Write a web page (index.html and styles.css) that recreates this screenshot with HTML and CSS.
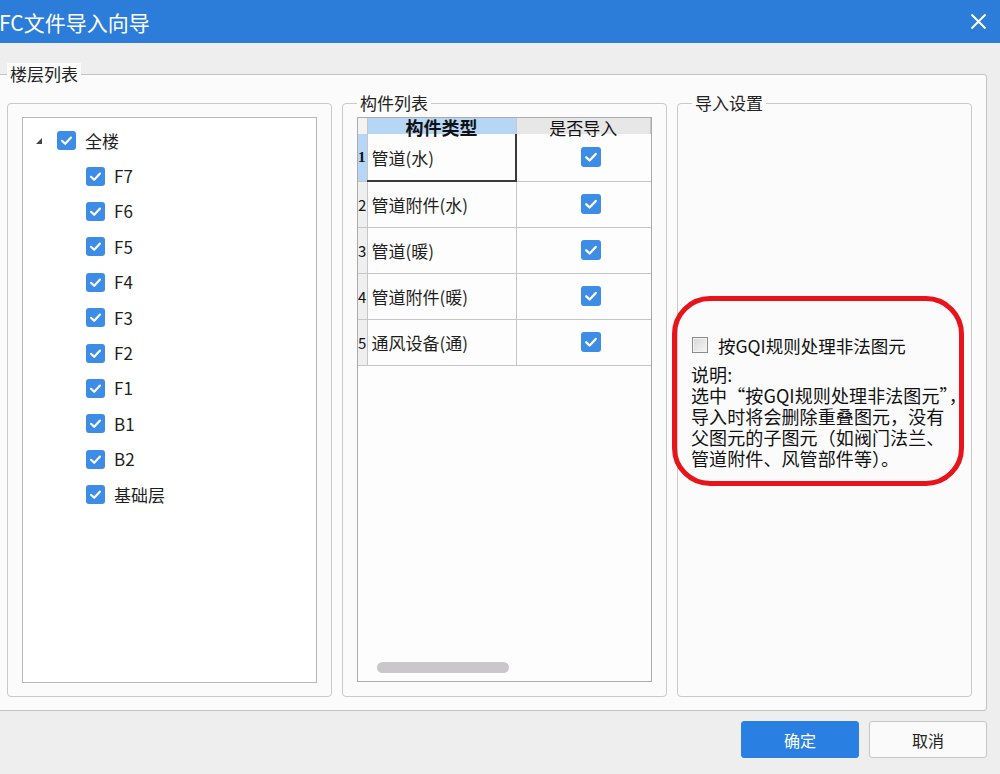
FILE: index.html
```html
<!DOCTYPE html>
<html lang="zh-CN">
<head>
    <meta charset="UTF-8">
    <meta name="viewport" content="width=device-width, initial-scale=1.0">
    <title>FC文件导入向导</title>
    <link rel="stylesheet" href="styles.css">
</head>
<body>
    <div class="dialog">
        <header class="titlebar">
            <span class="title">FC文件导入向导</span>
            <button class="close" aria-label="关闭">
                <svg width="17" height="17" viewBox="0 0 17 17"><path d="M1.5 1.5 L15.5 15.5 M15.5 1.5 L1.5 15.5" stroke="#fff" stroke-width="2" fill="none"/></svg>
            </button>
        </header>

        <section class="group">
            <span class="group-title">楼层列表</span>
            <div class="panels">
                <!-- floor tree -->
                <div class="panel panel-tree">
                    <ul class="tree">
                        <li class="tree-row root">
                            <span class="toggle"><svg width="8" height="8" viewBox="0 0 8 8"><path d="M7 1 L7 7 L1 7 Z" fill="#444"/></svg></span>
                            <span class="check"><svg viewBox="0 0 19 19"><path d="M5 9.8 L8.2 12.8 L14 6.6" stroke="#fff" stroke-width="2.2" fill="none" stroke-linecap="round" stroke-linejoin="round"/></svg></span>
                            <span class="label">全楼</span>
                        </li>
                        <li class="tree-row"><span class="check"><svg viewBox="0 0 19 19"><path d="M5 9.8 L8.2 12.8 L14 6.6" stroke="#fff" stroke-width="2.2" fill="none" stroke-linecap="round" stroke-linejoin="round"/></svg></span><span class="label">F7</span></li>
                        <li class="tree-row"><span class="check"><svg viewBox="0 0 19 19"><path d="M5 9.8 L8.2 12.8 L14 6.6" stroke="#fff" stroke-width="2.2" fill="none" stroke-linecap="round" stroke-linejoin="round"/></svg></span><span class="label">F6</span></li>
                        <li class="tree-row"><span class="check"><svg viewBox="0 0 19 19"><path d="M5 9.8 L8.2 12.8 L14 6.6" stroke="#fff" stroke-width="2.2" fill="none" stroke-linecap="round" stroke-linejoin="round"/></svg></span><span class="label">F5</span></li>
                        <li class="tree-row"><span class="check"><svg viewBox="0 0 19 19"><path d="M5 9.8 L8.2 12.8 L14 6.6" stroke="#fff" stroke-width="2.2" fill="none" stroke-linecap="round" stroke-linejoin="round"/></svg></span><span class="label">F4</span></li>
                        <li class="tree-row"><span class="check"><svg viewBox="0 0 19 19"><path d="M5 9.8 L8.2 12.8 L14 6.6" stroke="#fff" stroke-width="2.2" fill="none" stroke-linecap="round" stroke-linejoin="round"/></svg></span><span class="label">F3</span></li>
                        <li class="tree-row"><span class="check"><svg viewBox="0 0 19 19"><path d="M5 9.8 L8.2 12.8 L14 6.6" stroke="#fff" stroke-width="2.2" fill="none" stroke-linecap="round" stroke-linejoin="round"/></svg></span><span class="label">F2</span></li>
                        <li class="tree-row"><span class="check"><svg viewBox="0 0 19 19"><path d="M5 9.8 L8.2 12.8 L14 6.6" stroke="#fff" stroke-width="2.2" fill="none" stroke-linecap="round" stroke-linejoin="round"/></svg></span><span class="label">F1</span></li>
                        <li class="tree-row"><span class="check"><svg viewBox="0 0 19 19"><path d="M5 9.8 L8.2 12.8 L14 6.6" stroke="#fff" stroke-width="2.2" fill="none" stroke-linecap="round" stroke-linejoin="round"/></svg></span><span class="label">B1</span></li>
                        <li class="tree-row"><span class="check"><svg viewBox="0 0 19 19"><path d="M5 9.8 L8.2 12.8 L14 6.6" stroke="#fff" stroke-width="2.2" fill="none" stroke-linecap="round" stroke-linejoin="round"/></svg></span><span class="label">B2</span></li>
                        <li class="tree-row"><span class="check"><svg viewBox="0 0 19 19"><path d="M5 9.8 L8.2 12.8 L14 6.6" stroke="#fff" stroke-width="2.2" fill="none" stroke-linecap="round" stroke-linejoin="round"/></svg></span><span class="label">基础层</span></li>
                    </ul>
                </div>

                <!-- component grid -->
                <div class="panel">
                    <span class="panel-title">构件列表</span>
                    <div class="grid-box">
                        <table class="grid">
                            <colgroup>
                                <col class="col-num">
                                <col class="col-type">
                                <col class="col-import">
                            </colgroup>
                            <thead>
                                <tr>
                                    <th class="num"></th>
                                    <th class="head-type"><div class="head-text">构件类型</div></th>
                                    <th class="head-import"><div class="head-text">是否导入</div></th>
                                </tr>
                            </thead>
                            <tbody>
                                <tr class="current">
                                    <td class="num">1</td>
                                    <td class="name selected">管道(水)</td>
                                    <td class="flag"><span class="check big"><svg viewBox="0 0 19 19"><path d="M5 9.8 L8.2 12.8 L14 6.6" stroke="#fff" stroke-width="2.2" fill="none" stroke-linecap="round" stroke-linejoin="round"/></svg></span></td>
                                </tr>
                                <tr>
                                    <td class="num">2</td>
                                    <td class="name">管道附件(水)</td>
                                    <td class="flag"><span class="check big"><svg viewBox="0 0 19 19"><path d="M5 9.8 L8.2 12.8 L14 6.6" stroke="#fff" stroke-width="2.2" fill="none" stroke-linecap="round" stroke-linejoin="round"/></svg></span></td>
                                </tr>
                                <tr>
                                    <td class="num">3</td>
                                    <td class="name">管道(暖)</td>
                                    <td class="flag"><span class="check big"><svg viewBox="0 0 19 19"><path d="M5 9.8 L8.2 12.8 L14 6.6" stroke="#fff" stroke-width="2.2" fill="none" stroke-linecap="round" stroke-linejoin="round"/></svg></span></td>
                                </tr>
                                <tr>
                                    <td class="num">4</td>
                                    <td class="name">管道附件(暖)</td>
                                    <td class="flag"><span class="check big"><svg viewBox="0 0 19 19"><path d="M5 9.8 L8.2 12.8 L14 6.6" stroke="#fff" stroke-width="2.2" fill="none" stroke-linecap="round" stroke-linejoin="round"/></svg></span></td>
                                </tr>
                                <tr>
                                    <td class="num">5</td>
                                    <td class="name">通风设备(通)</td>
                                    <td class="flag"><span class="check big"><svg viewBox="0 0 19 19"><path d="M5 9.8 L8.2 12.8 L14 6.6" stroke="#fff" stroke-width="2.2" fill="none" stroke-linecap="round" stroke-linejoin="round"/></svg></span></td>
                                </tr>
                            </tbody>
                        </table>
                        <div class="hscroll"></div>
                    </div>
                </div>

                <!-- import settings -->
                <div class="panel">
                    <span class="panel-title">导入设置</span>
                    <div class="note">
                        <label class="option">
                            <span class="plain-check"></span>
                            <span>按GQI规则处理非法图元</span>
                        </label>
                        <p class="desc">说明:<br>选中“按GQI规则处理非法图元”，<br>导入时将会删除重叠图元，没有<br>父图元的子图元（如阀门法兰、<br>管道附件、风管部件等）。</p>
                    </div>
                </div>
            </div>
        </section>

        <footer class="actions">
            <button class="btn primary">确定</button>
            <button class="btn">取消</button>
        </footer>
    </div>
</body>
</html>
```

FILE: styles.css
```css
* {
    box-sizing: border-box;
}

body {
    margin: 0;
    width: 1000px;
    height: 774px;
    overflow: hidden;
    font-family: "Noto Sans CJK SC", "Noto Sans", sans-serif;
    background-color: #eeeeef;
    color: #1f1f1f;
}

.dialog {
    width: 1000px;
    height: 774px;
}

/* title bar */
.titlebar {
    height: 43px;
    display: flex;
    align-items: center;
    justify-content: space-between;
    background-color: #2c7dda;
    color: #fff;
}

.title {
    margin-left: -1px;
    font-size: 21px;
    line-height: 28px;
}

.close {
    border: none;
    background: none;
    padding: 0;
    margin-right: 13px;
    width: 17px;
    height: 17px;
    display: flex;
}

/* outer group box */
.group {
    margin: 31px 13px 0 -6px;
    padding: 0 14px 13px 12px;
    border: 1px solid #c4c4c6;
    border-radius: 3px;
    background-color: #fbfbfc;
}

.group-title,
.panel-title {
    display: block;
    width: max-content;
    margin-top: -12px;
    padding: 0 3px;
    font-size: 17px;
    line-height: 22px;
    background-color: #fbfbfc;
    color: #222;
}

.panels {
    margin-top: 18px;
    display: grid;
    grid-template-columns: 325px 325px 295px;
    gap: 10px;
}

.panel {
    height: 594px;
    padding: 0 14px;
    border: 1px solid #c9c9cb;
    border-radius: 4px;
    background-color: #fbfbfc;
}

.panel-tree {
    padding-top: 13px;
}

/* floor tree */
.tree {
    list-style: none;
    margin: 0;
    padding: 5px 0 0;
    height: 566px;
    border: 1px solid #b7b7b9;
    background-color: #fff;
}

.tree-row {
    height: 35.4px;
    display: flex;
    align-items: center;
    gap: 9px;
    padding-left: 63px;
}

.tree-row.root {
    padding-left: 12px;
    gap: 0;
}

.toggle {
    width: 8px;
    height: 8px;
    display: flex;
    margin-right: 14px;
}

.root .label {
    margin-left: 9px;
}

.label {
    font-size: 17px;
    line-height: 22px;
    color: #1e1e1e;
}

.check {
    width: 19px;
    height: 19px;
    display: inline-flex;
    border-radius: 3px;
    background-color: #3d8de6;
}

.check svg {
    width: 100%;
    height: 100%;
}

.check.big {
    width: 20px;
    height: 20px;
}

/* component grid */
.grid-box {
    margin-top: 3px;
    height: 565px;
    border: 1px solid #ababad;
    background-color: #fdfdfd;
    display: flex;
    flex-direction: column;
}

.grid {
    border-collapse: collapse;
    table-layout: fixed;
    width: 293px;
}

.col-num {
    width: 9px;
}

.col-type {
    width: 149px;
}

.grid th {
    height: 16px;
    padding: 0;
    font-weight: normal;
    border-right: 1px solid #c6c6c8;
    vertical-align: top;
}

.head-text {
    height: 16px;
    text-align: center;
    font-size: 17px;
    line-height: 19px;
    color: #111;
}

.head-type {
    background-color: #b6d6f6;
}

.head-type .head-text {
    font-weight: bold;
    font-size: 18px;
}

.head-import {
    background-color: #e7e7e8;
}

.grid th.num {
    background-color: #f3f3f4;
}

.grid td {
    height: 46px;
    padding: 0;
    border-right: 1px solid #c6c6c8;
    border-bottom: 1px solid #c6c6c8;
    font-size: 17px;
}

.grid tr.current td {
    height: 47px;
}

.grid td.num {
    background-color: #efeff0;
    font-size: 15px;
    text-align: left;
    overflow: hidden;
    color: #111;
}

.grid tr.current td.num {
    background-color: #b6d6f6;
    font-weight: bold;
    font-family: "Liberation Serif", serif;
}

.grid td.name {
    padding-left: 4px;
    color: #1e1e1e;
}

.grid td.selected {
    border-right: 2px solid #3a3a3a;
    border-bottom: 2px solid #3a3a3a;
}

.grid td.flag {
    padding-left: 64px;
    padding-bottom: 1px;
}

.grid td.flag .check {
    display: flex;
}

.grid td:last-child {
    border-right: none;
}

.hscroll {
    margin: auto 0 8px 19px;
    width: 132px;
    height: 11px;
    border-radius: 6px;
    background-color: #c9c7c9;
}

/* import settings note */
.note {
    margin: 182px 0 0 -20px;
    width: 292px;
    padding: 32px 8px 12px 14px;
    border: 5px solid #e8141c;
    border-radius: 38px;
}

.option {
    display: flex;
    align-items: center;
    gap: 10px;
    height: 24px;
    padding-left: 1px;
    font-size: 17.5px;
    color: #111;
}

.plain-check {
    width: 16px;
    height: 16px;
    border: 1px solid #8a8b8c;
    background: linear-gradient(135deg, #d6d6d6, #f6f6f6);
    box-shadow: inset 0 0 0 1px #f2f2f2;
}

.desc {
    margin: 7px 0 0;
    font-size: 18px;
    line-height: 21px;
    letter-spacing: 0.1px;
    white-space: nowrap;
    color: #111;
}

/* bottom buttons */
.actions {
    display: flex;
    justify-content: flex-end;
    gap: 10px;
    padding: 10px 13px 0;
}

.btn {
    width: 118px;
    height: 37px;
    border: 1px solid #c6c6c8;
    border-radius: 3px;
    background-color: #fafafa;
    font-family: inherit;
    font-size: 16px;
    color: #222;
}

.btn.primary {
    border-color: #2a80e2;
    background-color: #2a80e2;
    color: #fff;
}
```
